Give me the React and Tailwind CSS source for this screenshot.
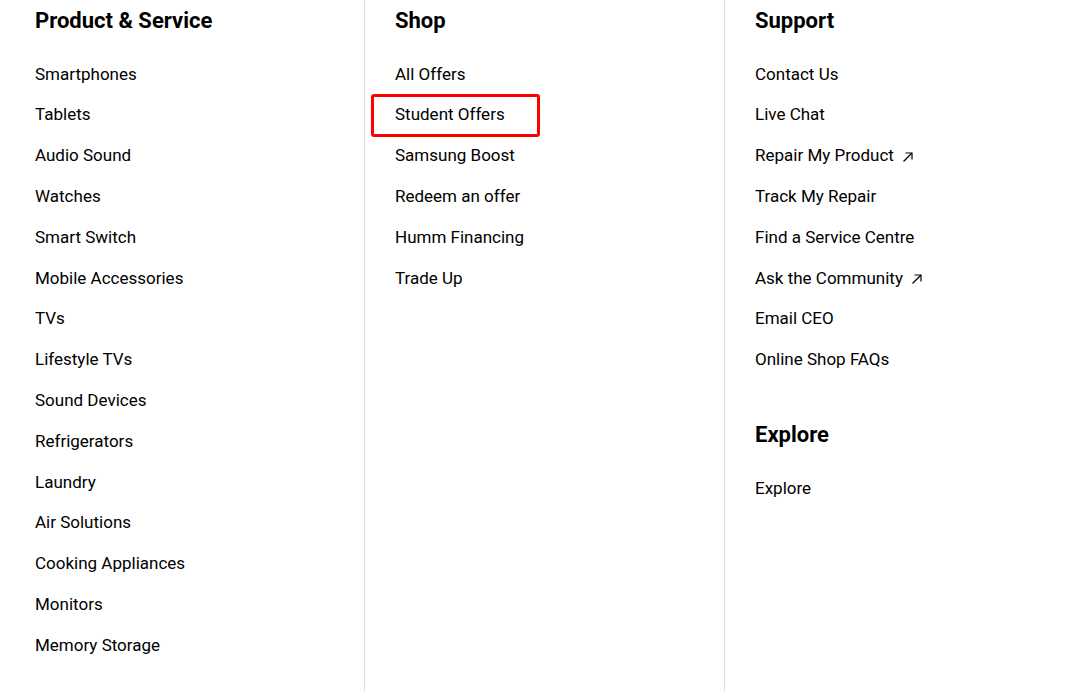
const columns = [
  {
    sections: [
      {
        title: "Product & Service",
        links: [
          "Smartphones",
          "Tablets",
          "Audio Sound",
          "Watches",
          "Smart Switch",
          "Mobile Accessories",
          "TVs",
          "Lifestyle TVs",
          "Sound Devices",
          "Refrigerators",
          "Laundry",
          "Air Solutions",
          "Cooking Appliances",
          "Monitors",
          "Memory Storage",
        ],
      },
    ],
  },
  {
    sections: [
      {
        title: "Shop",
        links: [
          "All Offers",
          { label: "Student Offers", marked: true },
          "Samsung Boost",
          "Redeem an offer",
          "Humm Financing",
          "Trade Up",
        ],
      },
    ],
  },
  {
    sections: [
      {
        title: "Support",
        links: [
          "Contact Us",
          "Live Chat",
          { label: "Repair My Product", external: true },
          "Track My Repair",
          "Find a Service Centre",
          { label: "Ask the Community", external: true },
          "Email CEO",
          "Online Shop FAQs",
        ],
      },
      { title: "Explore", links: ["Explore"] },
    ],
  },
];

function ExternalArrow() {
  return (
    <svg width="14" height="14" viewBox="0 0 14 14" fill="none" className="ml-[7px] mt-[2px]">
      <path d="M2.5 11.5 L11 3" stroke="#000" strokeWidth="1.2" />
      <path d="M4.5 3 H11 V9.5" stroke="#000" strokeWidth="1.2" />
    </svg>
  );
}

function FooterLink({ link }) {
  const item = typeof link === "string" ? { label: link } : link;
  return (
    <li className="relative flex h-[40.8px] items-center">
      <a href="#" className="flex items-center text-black">
        {item.label}
        {item.external && <ExternalArrow />}
      </a>
      {item.marked && (
        <span className="pointer-events-none absolute left-[-24px] top-[-1px] h-[43px] w-[169px] rounded-[3px] border-[3px] border-[#ff0000]" />
      )}
    </li>
  );
}

export default function App() {
  return (
    <div
      className="flex h-[691px] w-full overflow-hidden bg-white pl-[5px] text-[17px] text-black"
      style={{ fontFamily: "Roboto, 'Noto Sans', sans-serif" }}
    >
      {columns.map((col, i) => (
        <div
          key={i}
          className={
            i < 2
              ? "h-full w-[360px] shrink-0 border-r border-[#dddddd] pl-[30px]"
              : "h-full flex-1 pl-[30px]"
          }
        >
          {col.sections.map((sec, j) => (
            <div key={sec.title} className={j > 0 ? "mt-[34px]" : ""}>
              <h3 className="flex h-[38px] items-center pt-[2px] text-[22px] font-bold">{sec.title}</h3>
              <ul className="mt-[16px]">
                {sec.links.map((l) => (
                  <FooterLink key={typeof l === "string" ? l : l.label} link={l} />
                ))}
              </ul>
            </div>
          ))}
        </div>
      ))}
    </div>
  );
}
